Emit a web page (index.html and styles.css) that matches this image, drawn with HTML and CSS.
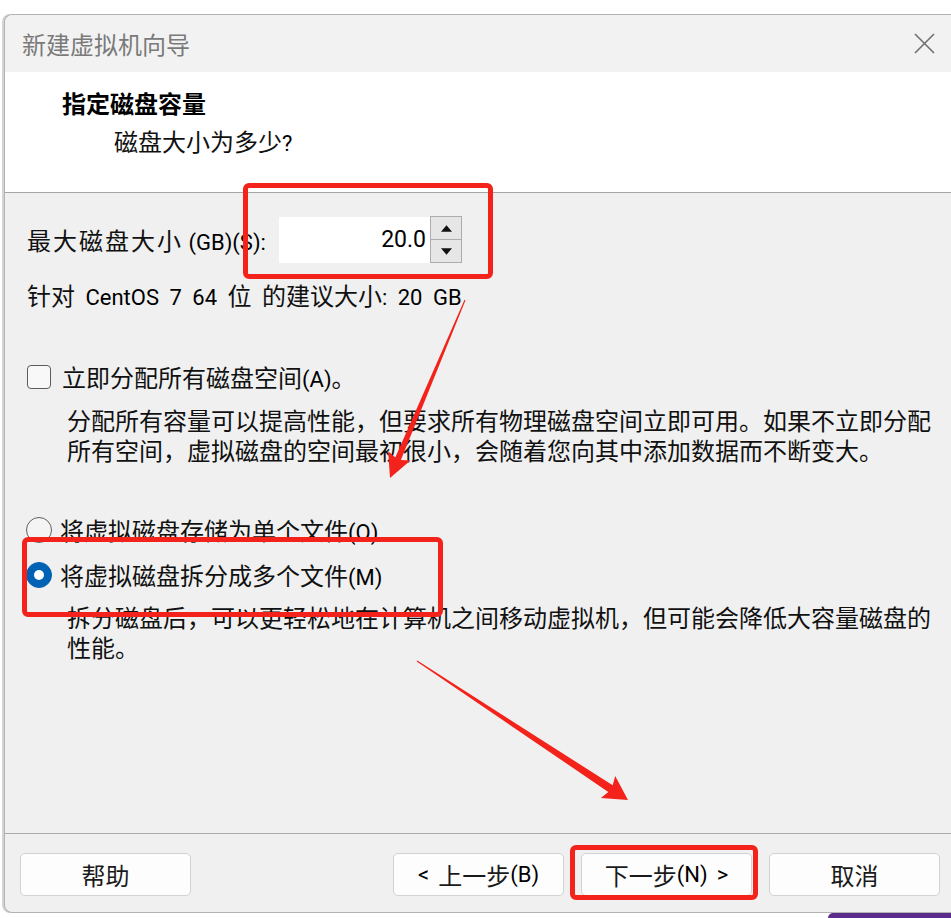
FILE: index.html
```html
<!DOCTYPE html>
<html lang="zh-CN">
<head>
<meta charset="utf-8">
<title>新建虚拟机向导</title>
<link rel="stylesheet" href="styles.css">
</head>
<body>
<div class="dialog">
  <div class="titlebar">
    <span class="title">新建虚拟机向导</span>
    <svg class="close" viewBox="0 0 21 21" aria-hidden="true">
      <path d="M1 1 L20 20 M20 1 L1 20" stroke="#6f6f6f" stroke-width="1.6" fill="none"/>
    </svg>
  </div>
  <div class="header">
    <div class="h-title">指定磁盘容量</div>
    <div class="h-sub">磁盘大小为多少<span class="en">?</span></div>
  </div>
  <div class="content">
    <div class="size-row">
      <label class="size-label"><span class="wide">最大磁盘大小</span><span class="en"> (GB)(S):</span></label>
      <div class="spin">
        <div class="spin-input">20.0</div>
        <div class="spin-btns">
          <div class="spin-btn">
            <svg viewBox="0 0 12 7" class="tri"><path d="M0 7 L6 0 L12 7 Z" fill="#111"/></svg>
          </div>
          <div class="spin-btn lower">
            <svg viewBox="0 0 12 7" class="tri"><path d="M0 0 L12 0 L6 7 Z" fill="#111"/></svg>
          </div>
        </div>
      </div>
    </div>
    <div class="recommend">针对<span class="en"> CentOS 7 64 </span>位<span class="en"> </span>的建议大小<span class="en">: 20 GB</span></div>

    <div class="check-row">
      <span class="checkbox"></span>
      <span>立即分配所有磁盘空间<span class="en">(A)</span>。</span>
    </div>
    <div class="desc">分配所有容量可以提高性能，但要求所有物理磁盘空间立即可用。如果不立即分配所有空间，虚拟磁盘的空间最初很小，会随着您向其中添加数据而不断变大。</div>

    <div class="radio-row first">
      <span class="radio"></span>
      <span>将虚拟磁盘存储为单个文件<span class="en">(O)</span></span>
    </div>
    <div class="radio-row second">
      <span class="radio on"></span>
      <span>将虚拟磁盘拆分成多个文件<span class="en">(M)</span></span>
    </div>
    <div class="desc split">拆分磁盘后，可以更轻松地在计算机之间移动虚拟机，但可能会降低大容量磁盘的性能。</div>
  </div>
  <div class="footer">
    <div class="btn">帮助</div>
    <div class="nav">
      <div class="btn"><span class="en lt">&lt;</span>上一步<span class="en">(B)</span></div>
      <div class="btn">下一步<span class="en">(N)</span><span class="en gt">&gt;</span></div>
      <div class="btn">取消</div>
    </div>
  </div>
</div>

<div class="mark mark-size"></div>
<div class="mark mark-split"></div>
<div class="mark mark-next"></div>

<svg class="arrows" viewBox="0 0 951 918" aria-hidden="true">
  <polygon fill="#f3231b" points="464.5,299.8 465.5,300.2 400.9,459.9 410.4,460.6 390,478 388.2,451.2 395.3,457.5"/>
  <polygon fill="#f3231b" points="417.3,660.6 612.7,785.3 615.2,776.1 628,800 600.9,797.9 608.3,792.0 416.7,661.4"/>
</svg>

<div class="peek"></div>
</body>
</html>
```
FILE: styles.css
```css
* { box-sizing: border-box; }

html, body {
  margin: 0;
  padding: 0;
}

body {
  width: 951px;
  height: 918px;
  overflow: hidden;
  position: relative;
  background: #ffffff;
  font-family: "Noto Sans CJK SC", sans-serif;
  font-size: 24px;
  color: #111111;
}

.en {
  font-family: Roboto, "DejaVu Sans", sans-serif;
  font-size: 22px;
  line-height: 1;
  color: #000;
}

.en.lt {
  margin-right: 9px;
}

.en.gt {
  margin-left: 9px;
}

.wide {
  letter-spacing: 2px;
}

.dialog {
  margin: 14px 0 0 4px;
  width: 947px;
  height: 899px;
  display: flex;
  flex-direction: column;
  background: #f0f0f0;
  border: 1px solid #b3b3b3;
  border-right: none;
  border-radius: 8px 0 0 8px;
  box-shadow: -2px 0 0 #d4d4d4;
}

.titlebar {
  height: 57px;
  flex: none;
  display: flex;
  align-items: center;
  justify-content: space-between;
  padding: 0 16px 0 17px;
  background: #f2f2f2;
  border-radius: 8px 0 0 0;
}

.title {
  font-size: 24px;
  line-height: 30px;
  color: #7a7a7a;
}

.close {
  width: 21px;
  height: 21px;
}

.header {
  height: 121px;
  flex: none;
  background: #ffffff;
  border-bottom: 1px solid #a5a5a5;
  padding: 16px 0 0 57px;
}

.h-title {
  font-weight: 700;
  line-height: 30px;
  color: #000;
}

.h-sub {
  margin-top: 8px;
  padding-left: 52px;
  line-height: 30px;
}

.content {
  flex: 1;
  padding: 24px 0 0 22px;
  line-height: 30px;
}

.size-row {
  display: flex;
  align-items: center;
  height: 46px;
}

.size-label {
  width: 252px;
  flex: none;
}

.spin {
  display: flex;
}

.spin-input {
  width: 151px;
  height: 46px;
  background: #ffffff;
  text-align: right;
  padding-right: 4px;
  line-height: 46px;
  font-family: Roboto, "DejaVu Sans", sans-serif;
  font-size: 23px;
  color: #000;
}

.spin-btns {
  width: 32px;
  height: 47px;
  margin-top: -1px;
  display: flex;
  flex-direction: column;
  border: 1px solid #adadad;
  background: #e6e6e6;
}

.spin-btn {
  flex: 1;
  display: flex;
  align-items: center;
  justify-content: center;
}

.spin-btn.lower {
  border-top: 1px solid #adadad;
}

.tri {
  width: 11px;
  height: 7px;
}

.recommend {
  margin-top: 17px;
  word-spacing: 5px;
}

.check-row {
  margin-top: 52px;
  display: flex;
  align-items: center;
  gap: 11px;
}

.checkbox {
  width: 24px;
  height: 24px;
  border: 1.5px solid #5c5c5c;
  border-radius: 4px;
  background: #f8f8f8;
}

.desc {
  margin-top: 13px;
  padding-left: 40px;
  width: 912px;
}

.radio-row {
  display: flex;
  align-items: center;
  gap: 8px;
  margin-left: -1px;
}

.radio-row.first {
  margin-top: 50px;
}

.radio-row.second {
  margin-top: 15px;
}

.radio {
  width: 26px;
  height: 26px;
  flex: none;
  border-radius: 50%;
  border: 1.5px solid #606060;
  background: #f4f4f4;
}

.radio.on {
  background: #0062b4;
  border-color: #0062b4;
  display: flex;
  align-items: center;
  justify-content: center;
}

.radio.on::after {
  content: "";
  width: 10px;
  height: 10px;
  border-radius: 50%;
  background: #ffffff;
}

.desc.split {
  margin-top: 12px;
}

.footer {
  height: 79px;
  flex: none;
  display: flex;
  align-items: flex-start;
  border-top: 1px solid #ababab;
  padding: 19px 11px 0 15px;
}

.nav {
  margin-left: auto;
  display: flex;
  gap: 17px;
}

.btn {
  width: 171px;
  height: 43px;
  display: flex;
  align-items: center;
  justify-content: center;
  background: #fdfdfd;
  border: 1px solid #d2d2d2;
  border-radius: 5px;
  font-size: 24px;
  color: #1a1a1a;
}

.mark {
  position: absolute;
  border: 5px solid #f3231b;
  border-radius: 6px;
}

.mark-size {
  left: 243px;
  top: 183px;
  width: 250px;
  height: 96px;
}

.mark-split {
  left: 22px;
  top: 537px;
  width: 421px;
  height: 80px;
}

.mark-next {
  left: 570px;
  top: 845px;
  width: 188px;
  height: 55px;
}

.arrows {
  position: absolute;
  left: 0;
  top: 0;
  width: 951px;
  height: 918px;
  pointer-events: none;
}

.peek {
  position: absolute;
  left: 828px;
  top: 913px;
  width: 130px;
  height: 5px;
  background: #5b2c8c;
  border-radius: 6px 0 0 0;
}
```
